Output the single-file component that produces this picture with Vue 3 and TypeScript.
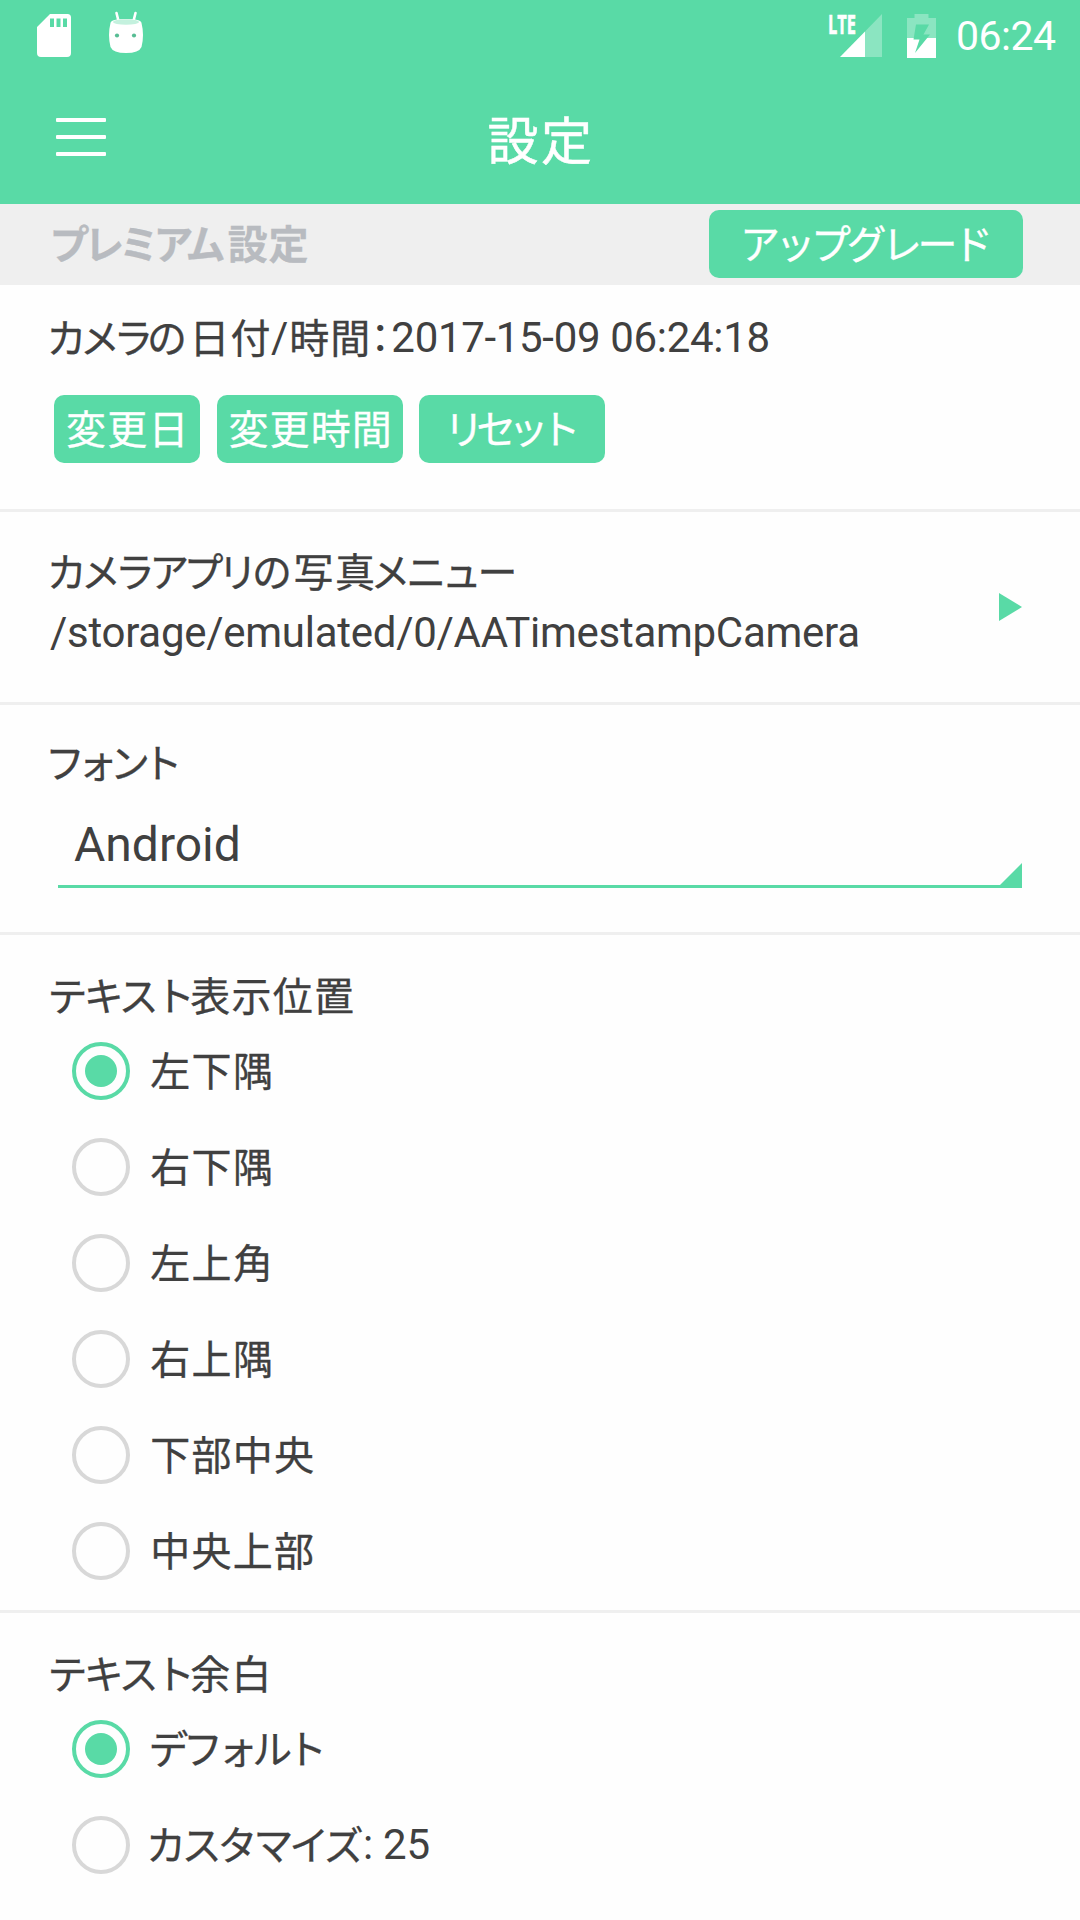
<script setup lang="ts">
import { ref } from 'vue'

interface Run {
  text: string
  kind: 'jp' | 'jp half' | 'latin'
  /** space before the run, px */
  gap: number
  /** letter spacing, px */
  track: number
}

const jp = (text: string, gap = 0, track = 0): Run => ({ text, kind: 'jp', gap, track })
const half = (text: string, gap = 0): Run => ({ text, kind: 'jp half', gap, track: 0 })
const latin = (text: string, gap = 0, track = 0): Run => ({ text, kind: 'latin', gap, track })

const runStyle = (run: Run) => ({
  marginLeft: `${run.gap}px`,
  letterSpacing: `${run.track}px`,
})

const premium: Run[] = [jp('プレミアム', -0.5, -5.3), jp('設定', 7.5, 0.8)]
const dateLine: Run[] = [
  jp('カメラの', -3.5, -6.5),
  jp('日付', 9, 1),
  latin('/', -0.5),
  jp('時間', 1, 1),
  half('：', -1),
  latin('2017-15-09 06:24:18', 1, -0.32),
]
const pathTitle: Run[] = [jp('カメラアプリの', -3.3, -5.8), jp('写真', 7.5, 1.5), jp('メニュー', -6, -4.4)]
const fontTitle: Run[] = [jp('フォント', -5, -7.5)]

const groups = ref([
  {
    title: [jp('テキスト', -2.5, -3.8), jp('表示位置', -0.8, 1.2)],
    selected: 0,
    options: [
      [jp('左下隅', -0.7, 1.3)],
      [jp('右下隅', -0.7, 1.3)],
      [jp('左上角', -0.7, 1.3)],
      [jp('右上隅', -0.7, 1.3)],
      [jp('下部中央', -0.7, 1.2)],
      [jp('中央上部', -0.7, 1.2)],
    ],
  },
  {
    title: [jp('テキスト', -2.5, -3.8), jp('余白', -0.8, 1.2)],
    selected: 0,
    options: [
      [jp('デフォルト', -2.5, -5.4)],
      [jp('カスタマイズ', -5, -4.2), latin(': 25', 3.5, -0.3)],
    ],
  },
])
</script>

<template>
  <div class="screen">
    <header class="top">
      <div class="status">
        <div class="status-left">
          <svg class="sd" width="34" height="43" viewBox="0 0 34 43">
            <path
              fill="#fff"
              fill-rule="evenodd"
              d="M13 0H30.500Q34 0 34 3.500V39Q34 43 30 43H4Q0 43 0 39V13ZM13 4.500V13H17V4.500ZM19.500 4.500V13H23.500V4.500ZM26 4.500V13H30V4.500Z"
            />
          </svg>
          <svg class="droid" width="36" height="43" viewBox="0 0 36 43">
            <path d="M8.500 2L11 12M27.500 2L25 12" stroke="#fff" stroke-width="2.600" stroke-linecap="round" />
            <path
              fill="#fff"
              d="M2.500 12Q3 8 18 8Q33 8 33.500 12Q36.500 24 33.500 36Q31 42 18 42Q5 42 2.500 36Q-.5 24 2.500 12Z"
            />
            <ellipse cx="18" cy="11" rx="13" ry="2.800" fill="#c4f1de" />
            <circle cx="9" cy="24.500" r="2.100" fill="#58bd94" />
            <circle cx="26" cy="24.500" r="2.100" fill="#58bd94" />
          </svg>
        </div>
        <div class="status-right">
          <span class="lte">LTE</span>
          <svg class="signal" width="42" height="43" viewBox="0 0 42 43">
            <path d="M25 17.500L42 0V43H25Z" fill="#fff" opacity=".3" />
            <path d="M0 43L25 17.500V43Z" fill="#fff" />
          </svg>
          <svg class="battery" width="29" height="44" viewBox="0 0 29 44">
            <path d="M0 4H7.500V0H21.500V4H29V24H0Z" fill="#fff" opacity=".3" />
            <path d="M0 24H29V44H0Z" fill="#fff" />
            <path d="M9 10.500H22L16.500 20.500H23L8 39L12.500 25.500H6.500Z" fill="#59daa6" />
          </svg>
          <span class="clock">06:24</span>
        </div>
      </div>
      <div class="appbar">
        <button class="menu" aria-label="menu"><i /><i /><i /></button>
        <h1 class="title">設定</h1>
      </div>
    </header>

    <div class="premium">
      <div class="line premium-text">
        <span v-for="(r, i) in premium" :key="i" :class="r.kind" :style="runStyle(r)">{{ r.text }}</span>
      </div>
      <button class="btn upgrade">アップグレード</button>
    </div>

    <section class="card date">
      <div class="line">
        <span v-for="(r, i) in dateLine" :key="i" :class="r.kind" :style="runStyle(r)">{{ r.text }}</span>
      </div>
      <div class="buttons">
        <button class="btn day">変更日</button>
        <button class="btn time">変更時間</button>
        <button class="btn reset">リセット</button>
      </div>
    </section>

    <section class="card folder">
      <div class="folder-text">
        <div class="line">
          <span v-for="(r, i) in pathTitle" :key="i" :class="r.kind" :style="runStyle(r)">{{ r.text }}</span>
        </div>
        <div class="line path">/storage/emulated/0/AATimestampCamera</div>
      </div>
      <svg class="arrow" width="23" height="28" viewBox="0 0 23 28"><path d="M0 0L23 14L0 28Z" fill="#59daa6" /></svg>
    </section>

    <section class="card font">
      <div class="line">
        <span v-for="(r, i) in fontTitle" :key="i" :class="r.kind" :style="runStyle(r)">{{ r.text }}</span>
      </div>
      <div class="select">
        <span>Android</span>
        <svg width="22" height="22" viewBox="0 0 22 22"><path d="M22 0V22H0Z" fill="#59daa6" /></svg>
      </div>
    </section>

    <section v-for="(g, gi) in groups" :key="gi" class="card group">
      <div class="line">
        <span v-for="(r, i) in g.title" :key="i" :class="r.kind" :style="runStyle(r)">{{ r.text }}</span>
      </div>
      <div class="options">
        <div v-for="(o, oi) in g.options" :key="oi" class="option" @click="g.selected = oi">
          <span class="radio" :class="{ on: g.selected === oi }" />
          <div class="line">
            <span v-for="(r, i) in o" :key="i" :class="r.kind" :style="runStyle(r)">{{ r.text }}</span>
          </div>
        </div>
      </div>
    </section>
  </div>
</template>

<style>
body {
  background: #fefefe;
}
</style>

<style scoped>
.screen {
  width: 1080px;
  height: 1920px;
  overflow: hidden;
  background: #fefefe;
  color: #404040;
  font-family: Roboto, 'Noto Sans CJK JP', sans-serif;
  font-size: 42px;
}
.screen * {
  box-sizing: border-box;
}
button {
  border: 0;
  padding: 0;
  margin: 0;
  background: none;
}
svg {
  display: block;
  flex: none;
}
.top {
  height: 204px;
  background: #59daa6;
  color: #fff;
}
.status {
  height: 72px;
  display: flex;
  justify-content: space-between;
  padding: 0 23px 0 37px;
}
.status-left,
.status-right {
  display: flex;
  align-items: flex-start;
}
.sd {
  margin-top: 14px;
}
.droid {
  margin: 11px 0 0 37px;
}
.lte {
  font: 700 26.5px/26px 'Open Sans', sans-serif;
  -webkit-text-stroke: 0.6px #fff;
  width: 12px;
  margin-top: 11px;
  white-space: nowrap;
  transform: scaleX(0.62);
  transform-origin: 0 0;
}
.signal {
  margin-top: 14px;
}
.battery {
  margin: 14px 0 0 25px;
}
.clock {
  margin: 11px 0 0 20px;
  width: 101px;
  font-size: 41px;
  line-height: 50px;
  letter-spacing: -0.5px;
}
.appbar {
  height: 132px;
  display: grid;
  grid-template-columns: 107px 1fr 105px;
}
.menu {
  display: flex;
  flex-direction: column;
  gap: 13px;
  padding: 46px 0 0 56px;
}
.menu i {
  width: 50px;
  height: 4px;
  border-radius: 1px;
  background: #fff;
}
.title {
  margin: 0;
  text-align: center;
  font: 400 51px/133px 'Noto Sans CJK JP', sans-serif;
  letter-spacing: 2.5px;
  -webkit-text-stroke: 0.5px currentColor;
}
.line {
  height: 50px;
  line-height: 50px;
  white-space: nowrap;
  font-size: 42px;
}
.jp {
  font-family: 'Noto Sans CJK JP', sans-serif;
  font-size: 40px;
  line-height: 0;
  vertical-align: -1px;
  -webkit-text-stroke: 0.3px currentColor;
}
.half {
  font-feature-settings: 'halt';
  -webkit-text-stroke: 0;
}
.latin {
  line-height: 0;
}
.premium {
  height: 81px;
  background: #efefef;
  display: flex;
  justify-content: space-between;
  padding: 6px 57px 0 50px;
}
.premium-text {
  margin-top: 9px;
  color: #b8bbc0;
  font-weight: 700;
}
.btn {
  height: 68px;
  border-radius: 10px;
  background: #59daa6;
  color: #fff;
  display: flex;
  font: 400 40px/65px 'Noto Sans CJK JP', sans-serif;
  -webkit-text-stroke: 0.3px currentColor;
  white-space: nowrap;
}
.upgrade {
  width: 314px;
  padding-left: 31px;
  letter-spacing: -4.500px;
}
.card {
  border-bottom: 3px solid #efefef;
  padding-left: 50px;
}
.date {
  height: 227px;
  padding-top: 28px;
}
.buttons {
  display: flex;
  margin: 32px 0 0 4px;
}
.day {
  width: 146px;
  padding-left: 12px;
  letter-spacing: 1.3px;
}
.time {
  width: 186px;
  margin-left: 17px;
  padding-left: 11.5px;
  letter-spacing: 1.1px;
}
.reset {
  width: 186px;
  margin-left: 16px;
  padding-left: 25px;
  letter-spacing: -7.8px;
}
.folder {
  height: 193px;
  padding-top: 35px;
  padding-right: 58px;
  display: flex;
  justify-content: space-between;
}
.path {
  margin-top: 11px;
  letter-spacing: -0.27px;
}
.arrow {
  margin-top: 46px;
}
.font {
  height: 230px;
  padding-top: 33px;
}
.select {
  width: 964px;
  height: 74px;
  margin: 26px 0 0 8px;
  padding-left: 16px;
  border-bottom: 3px solid #59daa6;
  display: flex;
  justify-content: space-between;
  align-items: flex-end;
  font-size: 48px;
}
.select span {
  align-self: flex-start;
  line-height: 61px;
}
.group {
  height: 678px;
  padding-top: 36px;
}
.options {
  margin-top: 2px;
  padding-left: 22px;
}
.option {
  height: 96px;
  display: flex;
  align-items: center;
}
.radio {
  width: 58px;
  height: 58px;
  margin-right: 21px;
  border: 4px solid #d8d8d8;
  border-radius: 50%;
  display: flex;
  align-items: center;
  justify-content: center;
}
.radio.on {
  border-color: #59daa6;
}
.radio.on::after {
  content: '';
  width: 32px;
  height: 32px;
  border-radius: 50%;
  background: #59daa6;
}
</style>
